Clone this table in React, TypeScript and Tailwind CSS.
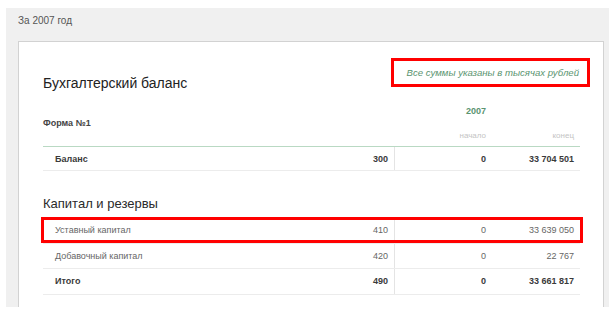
const rows = [
  { label: "Уставный капитал", code: "410", start: "0", end: "33 639 050", marked: true },
  { label: "Добавочный капитал", code: "420", start: "0", end: "22 767" },
  { label: "Итого", code: "490", start: "0", end: "33 661 817", bold: true },
];

type Row = {
  label: string;
  code: string;
  start: string;
  end: string;
  bold?: boolean;
  marked?: boolean;
};

function BalanceRow({ row, first }: { row: Row; first?: boolean }) {
  const tone = row.bold ? "font-bold text-[#3a3a3a]" : "text-[#666]";
  return (
    <div
      className={`relative grid grid-cols-[301px_50px_98px_88px] border-b border-[#ececec] text-[9px] leading-[12px] ${
        first ? "h-[24px]" : "h-[25.5px]"
      } ${tone}`}
    >
      <div className="flex items-center pl-[12px]">{row.label}</div>
      <div className="flex items-center justify-end pr-[6px]">{row.code}</div>
      <div className="flex items-center justify-end border-l border-[#e4e4e4] pr-[6px]">{row.start}</div>
      <div className="flex items-center justify-end pr-[6px]">{row.end}</div>
      {row.marked && (
        <div className="absolute -top-[1px] -left-[2px] -right-[3px] bottom-0 border-[3px] border-[#ff0000]" />
      )}
    </div>
  );
}

export default function App() {
  return (
    <div className="h-[319px] bg-white pt-[8px] font-['Liberation_Sans',Arial,sans-serif]">
      <div className="ml-[6px] h-[299px] w-[603px] overflow-hidden bg-[#f0f0f0] pl-[12px] pr-[5px] pt-[6px]">
        <div className="text-[10px] leading-[14px] text-[#555]">За 2007 год</div>

        <div className="mt-[13px] h-[400px] border border-[#d2d2d2] bg-white pl-[24px] pr-[23px] pt-[16px]">
          {/* header: title + units note */}
          <div className="flex items-start justify-between">
            <h1 className="mt-[16px] text-[14px] leading-[18px] text-[#222]">Бухгалтерский баланс</h1>
            <div className="-mr-[10px] border-[3px] border-[#ff0000] pl-[13px] pr-[8px] text-[9.6px] italic leading-[23px] text-[#5a9470]">
              Все суммы указаны в тысячах рублей
            </div>
          </div>

          {/* column headings */}
          <div className="mt-[13px] grid grid-cols-[301px_50px_98px_88px] border-b border-[#b9d9c3] pb-[4px]">
            <div className="pt-[12px] text-[9px] font-bold leading-[12px] text-[#444]">Форма №1</div>
            <div />
            <div className="flex flex-col items-end pr-[6px]">
              <span className="text-[9px] font-bold leading-[12px] text-[#5a9470]">2007</span>
              <span className="mt-[13px] text-[8px] leading-[12px] text-[#c4c4c4]">начало</span>
            </div>
            <div className="flex items-end justify-end pr-[6px]">
              <span className="text-[8px] leading-[12px] text-[#c4c4c4]">конец</span>
            </div>
          </div>

          <BalanceRow first row={{ label: "Баланс", code: "300", start: "0", end: "33 704 501", bold: true }} />

          <h2 className="mt-[25px] text-[13px] leading-[16px] text-[#2a2a2a]">Капитал и резервы</h2>

          <div className="mt-[6px]">
            {rows.map((r) => (
              <BalanceRow key={r.code} row={r} />
            ))}
          </div>
        </div>
      </div>
    </div>
  );
}
